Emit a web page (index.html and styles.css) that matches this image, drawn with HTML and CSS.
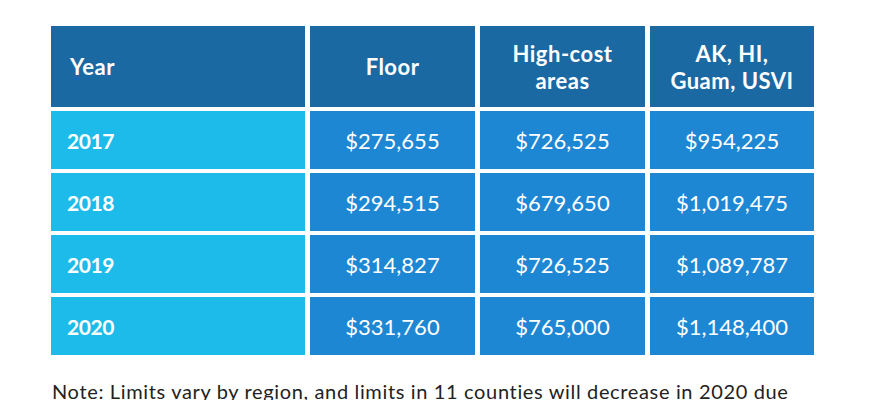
FILE: index.html
```html
<!DOCTYPE html>
<html lang="en">
<head>
<meta charset="utf-8">
<title>Loan limits</title>
<link rel="stylesheet" href="styles.css">
</head>
<body>
<div class="page">
  <div class="table">
    <div class="cell head head-year">Year</div>
    <div class="cell head">Floor</div>
    <div class="cell head">High-cost<br>areas</div>
    <div class="cell head">AK, HI,<br>Guam, USVI</div>

    <div class="cell year">2017</div>
    <div class="cell val">$275,655</div>
    <div class="cell val">$726,525</div>
    <div class="cell val">$954,225</div>

    <div class="cell year">2018</div>
    <div class="cell val">$294,515</div>
    <div class="cell val">$679,650</div>
    <div class="cell val">$1,019,475</div>

    <div class="cell year">2019</div>
    <div class="cell val">$314,827</div>
    <div class="cell val">$726,525</div>
    <div class="cell val">$1,089,787</div>

    <div class="cell year">2020</div>
    <div class="cell val">$331,760</div>
    <div class="cell val">$765,000</div>
    <div class="cell val">$1,148,400</div>
  </div>
  <p class="note">Note: Limits vary by region, and limits in 11 counties will decrease in 2020 due</p>
</div>
</body>
</html>
```

FILE: styles.css
```css
html, body {
  margin: 0;
  padding: 0;
  background: #ffffff;
  overflow: hidden;
}

.page {
  padding: 26px 0 0 51px;
  font-family: Lato, "Noto Sans", sans-serif;
}

.table {
  display: grid;
  grid-template-columns: 254px 165px 165px 164px;
  grid-template-rows: 81px 58px 58px 58px 58px;
  column-gap: 5px;
  row-gap: 4px;
  width: 763px;
}

.cell {
  display: flex;
  align-items: center;
  justify-content: center;
  color: #ffffff;
  font-size: 22px;
  box-sizing: border-box;
}

.head {
  background: #1b69a3;
  font-weight: 700;
  text-align: center;
  line-height: 27px;
  font-size: 22px;
  letter-spacing: 0.5px;
}

.head-year {
  justify-content: flex-start;
  padding-left: 19px;
}

.year {
  background: #1dbbea;
  justify-content: flex-start;
  padding-left: 16px;
  font-weight: 700;
  font-size: 21px;
  letter-spacing: -0.4px;
}

.val {
  background: #1e87d4;
  font-weight: 400;
}

.note {
  margin: 24px 0 0 1px;
  font-size: 20px;
  line-height: 24px;
  letter-spacing: 0.65px;
  color: #222222;
  white-space: nowrap;
}
```
